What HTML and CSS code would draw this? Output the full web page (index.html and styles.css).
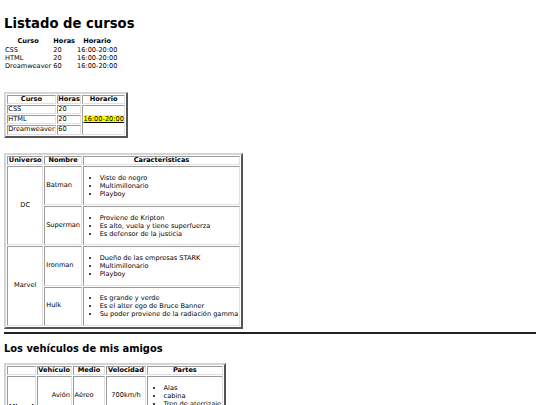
FILE: index.html
```html
<!DOCTYPE html>
<html lang="es">
<head>
<meta charset="utf-8">
<title>Listado de cursos</title>
<link rel="stylesheet" href="styles.css">
</head>
<body>
<h1 class="title">Listado de cursos</h1>

<table class="plain">
  <tr><th>Curso</th><th>Horas</th><th>Horario</th></tr>
  <tr><td>CSS</td><td>20</td><td>16:00-20:00</td></tr>
  <tr><td>HTML</td><td>20</td><td>16:00-20:00</td></tr>
  <tr><td>Dreamweaver</td><td>60</td><td>16:00-20:00</td></tr>
</table>

<table class="grid cursos">
  <tr><th>Curso</th><th>Horas</th><th>Horario</th></tr>
  <tr><td>CSS</td><td>20</td><td rowspan="3" class="center"><span class="hl">16:00-20:00</span></td></tr>
  <tr><td>HTML</td><td>20</td></tr>
  <tr><td>Dreamweaver</td><td>60</td></tr>
</table>

<table class="grid heroes">
  <tr><th>Universo</th><th>Nombre</th><th>Caracteristicas</th></tr>
  <tr>
    <td rowspan="2" class="center">DC</td>
    <td>Batman</td>
    <td><ul class="list"><li>Viste de negro</li><li>Multimillonario</li><li>Playboy</li></ul></td>
  </tr>
  <tr>
    <td>Superman</td>
    <td><ul class="list"><li>Proviene de Kripton</li><li>Es alto, vuela y tiene superfuerza</li><li>Es defensor de la justicia</li></ul></td>
  </tr>
  <tr>
    <td rowspan="2" class="center">Marvel</td>
    <td>Ironman</td>
    <td><ul class="list"><li>Dueño de las empresas STARK</li><li>Multimillonario</li><li>Playboy</li></ul></td>
  </tr>
  <tr>
    <td>Hulk</td>
    <td><ul class="list"><li>Es grande y verde</li><li>Es el alter ego de Bruce Banner</li><li>Su poder proviene de la radiación gamma</li></ul></td>
  </tr>
</table>

<hr class="rule">

<h2 class="subtitle">Los vehículos de mis amigos</h2>

<table class="grid vehicles">
  <tr><th></th><th>Vehículo</th><th>Medio</th><th>Velocidad</th><th>Partes</th></tr>
  <tr>
    <th rowspan="2">Miguel</th>
    <td class="right">Avión</td>
    <td>Aéreo</td>
    <td class="center">700km/h</td>
    <td><ul class="list"><li>Alas</li><li>cabina</li><li>Tren de aterrizaje</li></ul></td>
  </tr>
  <tr>
    <td class="right">Coche</td>
    <td>Terrestre</td>
    <td class="center">180km/h</td>
    <td><ul class="list"><li>Ruedas</li></ul></td>
  </tr>
</table>
</body>
</html>
```

FILE: styles.css
```css
html, body {
  background: #fff;
}
body {
  margin: 5px 4px;
  font-family: "DejaVu Sans", Verdana, sans-serif;
  font-size: 6.6px;
  color: #000;
}
.title {
  font-size: 13.2px;
  line-height: 15px;
  margin: 11px 0 6px;
  font-weight: bold;
}
.subtitle {
  font-size: 9.9px;
  line-height: 12px;
  margin: 9px 0 8px;
  font-weight: bold;
}
table {
  font-size: 6.6px;
  line-height: 7px;
}
.plain {
  border-collapse: separate;
  border-spacing: 1px;
}
.plain th, .plain td {
  padding: 0.2px 1px 0.2px 0;
  text-align: left;
}
.plain th {
  text-align: center;
}
.grid {
  border-collapse: separate;
  border-spacing: 1px;
  border: 2px solid;
  border-color: #d4d4d4 #555 #555 #d4d4d4;
  line-height: 7.3px;
}
.grid th, .grid td {
  border: 1px solid;
  border-color: #9a9a9a #e0e0e0 #e0e0e0 #9a9a9a;
  padding: 0 0.8px;
  text-align: left;
  vertical-align: middle;
}
.grid th {
  text-align: center;
  font-weight: bold;
}
.cursos {
  margin-top: 20px;
}
.cursos th, .cursos td {
  padding: 0 0.3px;
}
.heroes {
  margin-top: 15px;
}
.center {
  text-align: center !important;
}
.right {
  text-align: right !important;
}
.hl {
  background: #ffff00;
  text-decoration: underline;
}
.list {
  margin: 6.6px 0;
  padding: 0 0 0 15px;
  line-height: 8px;
}
.rule {
  margin: 3px 0 0;
  height: 0;
  border: 0;
  border-top: 2px solid #222;
}
```
